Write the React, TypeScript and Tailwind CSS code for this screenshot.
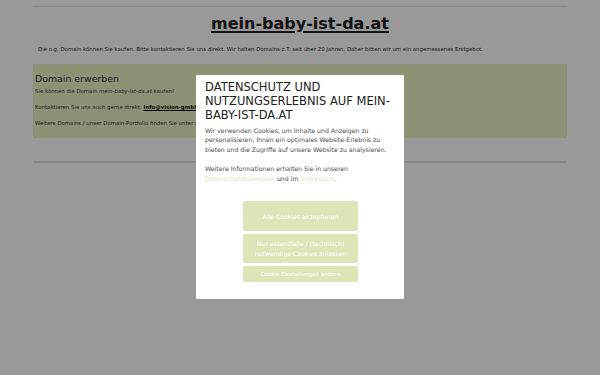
import React from 'react';

const font = { fontFamily: '"DejaVu Sans", Verdana, sans-serif' };

export default function App() {
  return (
    <div className="relative w-[600px] h-[375px] overflow-hidden bg-white text-[#333]" style={font}>
      {/* Page behind the consent overlay */}
      <div className="mx-[33px] pt-[6px]">
        <div className="border-t border-[#e3e3e3]" />
        <h1 className="mt-[7px] text-center text-[16px] leading-[20px] font-bold text-[#222] underline decoration-[1.5px] underline-offset-[2px]">
          mein-baby-ist-da.at
        </h1>
        <p className="mt-[11px] pl-[5px] text-[5.4px] leading-[8px] text-[#333]">
          Die o.g. Domain können Sie kaufen. Bitte kontaktieren Sie uns direkt. Wir halten Domains z.T. seit über 20 Jahren. Daher bitten wir um ein angemessenes Erstgebot.
        </p>
        <div className="mt-[11px] h-[74px] bg-[#eef2c6] pl-[2px] pt-[9px]">
          <h2 className="text-[9.4px] leading-[11px] text-[#333]">Domain erwerben</h2>
          <div className="mt-[4px] flex flex-col gap-[9px] text-[5.4px] leading-[7px]">
            <p>
              Sie können die Domain <em>mein-baby-ist-da.at</em> kaufen!
            </p>
            <p>
              Kontaktieren Sie uns auch gerne direkt:{' '}
              <a className="font-bold underline text-[#111]">info@vision-gmbh.at</a>
            </p>
            <p>Weitere Domains / unser Domain-Portfolio finden Sie unter www.vision-gmbh.at</p>
          </div>
        </div>
        <div className="mt-[23px] border-t-2 border-[#e3e3e3]" />
      </div>

      {/* Dim layer */}
      <div className="absolute inset-0 bg-black/40" />

      {/* Consent dialog */}
      <div className="absolute inset-0 flex items-center justify-center">
        <div className="w-[208px] bg-white pl-[9px] pr-[8px] pt-[5px] pb-[17px] -mt-[1px]">
          <h3 className="text-[11.5px] leading-[14px] text-[#222] uppercase">
            Datenschutz und Nutzungserlebnis auf mein-baby-ist-da.at
          </h3>
          <div className="mt-[4px] text-[6.2px] leading-[9.6px] text-[#4a4a4a]">
            <p>
              Wir verwenden Cookies, um Inhalte und Anzeigen zu personalisieren, Ihnen ein optimales Website-Erlebnis zu
              bieten und die Zugriffe auf unsere Website zu analysieren.
            </p>
            <p className="mt-[9.6px]">
              Weitere Informationen erhalten Sie in unseren <a className="text-[#dfe3b8]">Datenschutzhinweisen</a> und im{' '}
              <a className="text-[#dfe3b8]">Impressum</a>.
            </p>
          </div>
          <div className="mt-[18px] flex flex-col items-center gap-[3px]">
            <button className="w-[115px] h-[30px] rounded-[2px] bg-[#dfe3b8] text-white text-[6.2px] leading-[9px]">
              Alle Cookies akzeptieren
            </button>
            <button className="w-[115px] h-[29px] rounded-[2px] bg-[#dfe3b8] text-white text-[6.2px] leading-[9.5px]">
              Nur essenzielle / (technisch)
              <br />
              notwendige Cookies zulassen
            </button>
            <button className="w-[115px] h-[16px] rounded-[2px] bg-[#dfe3b8] text-white text-[5.6px] leading-[7px]">
              Cookie Einstellungen ändern
            </button>
          </div>
        </div>
      </div>
    </div>
  );
}
